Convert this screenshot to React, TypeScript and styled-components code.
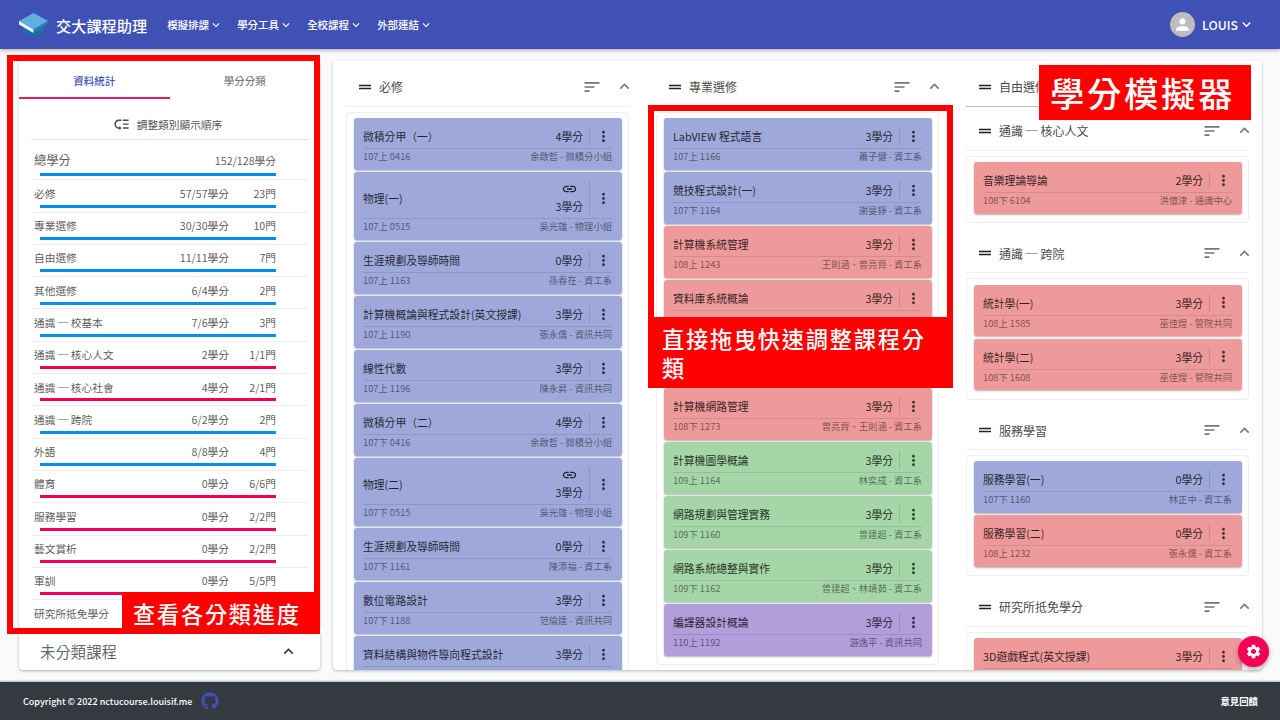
import React from "react";
import styled, { createGlobalStyle } from "styled-components";
import {
  MdDragHandle,
  MdExpandLess,
  MdExpandMore,
  MdLink,
  MdLowPriority,
  MdMoreVert,
  MdPerson,
  MdSettings,
  MdSort,
} from "react-icons/md";
import { FaGithub } from "react-icons/fa";

const GlobalStyle = createGlobalStyle`
  html, body {
    margin: 0;
    padding: 0;
    height: 100%;
    overflow: hidden;
    background: #fafafa;
    font-family: "Noto Sans CJK TC", "Noto Sans", sans-serif;
  }
  * {
    box-sizing: border-box;
  }
`;

type Tone = "blue" | "red" | "green" | "purple";

const toneColors: Record<Tone, string> = {
  blue: "#9fa8da",
  red: "#ef9a9a",
  green: "#a5d6a7",
  purple: "#b39ddb",
};

type Course = {
  name: string;
  credit: number | null;
  term: string;
  teacher: string;
  tone: Tone;
  linked?: boolean;
};

const requiredCourses: Course[] = [
  { name: "微積分甲（一）", credit: 4, term: "107上 0416", teacher: "余啟哲 - 微積分小組", tone: "blue" },
  { name: "物理(一)", credit: 3, term: "107上 0515", teacher: "吳光雄 - 物理小組", tone: "blue", linked: true },
  { name: "生涯規劃及導師時間", credit: 0, term: "107上 1163", teacher: "孫春在 - 資工系", tone: "blue" },
  { name: "計算機概論與程式設計(英文授課)", credit: 3, term: "107上 1190", teacher: "張永儒 - 資訊共同", tone: "blue" },
  { name: "線性代數", credit: 3, term: "107上 1196", teacher: "陳永昇 - 資訊共同", tone: "blue" },
  { name: "微積分甲（二）", credit: 4, term: "107下 0416", teacher: "余啟哲 - 微積分小組", tone: "blue" },
  { name: "物理(二)", credit: 3, term: "107下 0515", teacher: "吳光雄 - 物理小組", tone: "blue", linked: true },
  { name: "生涯規劃及導師時間", credit: 0, term: "107下 1161", teacher: "陳添福 - 資工系", tone: "blue" },
  { name: "數位電路設計", credit: 3, term: "107下 1188", teacher: "范倫達 - 資訊共同", tone: "blue" },
  { name: "資料結構與物件導向程式設計", credit: 3, term: "", teacher: "", tone: "blue" },
];

const majorCourses: Course[] = [
  { name: "LabVIEW 程式語言", credit: 3, term: "107上 1166", teacher: "蕭子健 - 資工系", tone: "blue" },
  { name: "競技程式設計(一)", credit: 3, term: "107下 1164", teacher: "謝旻錚 - 資工系", tone: "blue" },
  { name: "計算機系統管理", credit: 3, term: "108上 1243", teacher: "王則涵、曾亮齊 - 資工系", tone: "red" },
  { name: "資料庫系統概論", credit: 3, term: "", teacher: "", tone: "red" },
  // 被標註蓋住的卡片
  { name: "", credit: null, term: "", teacher: "", tone: "red" },
  { name: "計算機網路管理", credit: 3, term: "108下 1273", teacher: "曾亮齊、王則涵 - 資工系", tone: "red" },
  { name: "計算機圖學概論", credit: 3, term: "109上 1164", teacher: "林奕成 - 資工系", tone: "green" },
  { name: "網路規劃與管理實務", credit: 3, term: "109下 1160", teacher: "曾建超 - 資工系", tone: "green" },
  { name: "網路系統總整與實作", credit: 3, term: "109下 1162", teacher: "曾建超、林靖茹 - 資工系", tone: "green" },
  { name: "編譯器設計概論", credit: 3, term: "110上 1192", teacher: "游逸平 - 資訊共同", tone: "purple" },
];

const freeSections: { title: string; courses: Course[] }[] = [
  {
    title: "通識 ─ 核心人文",
    courses: [{ name: "音樂理論導論", credit: 2, term: "108下 6104", teacher: "洪億津 - 通識中心", tone: "red" }],
  },
  {
    title: "通識 ─ 跨院",
    courses: [
      { name: "統計學(一)", credit: 3, term: "108上 1585", teacher: "巫佳煌 - 管院共同", tone: "red" },
      { name: "統計學(二)", credit: 3, term: "108下 1608", teacher: "巫佳煌 - 管院共同", tone: "red" },
    ],
  },
  {
    title: "服務學習",
    courses: [
      { name: "服務學習(一)", credit: 0, term: "107下 1160", teacher: "林正中 - 資工系", tone: "blue" },
      { name: "服務學習(二)", credit: 0, term: "108上 1232", teacher: "張永儒 - 資工系", tone: "red" },
    ],
  },
  {
    title: "研究所抵免學分",
    courses: [{ name: "3D遊戲程式(英文授課)", credit: 3, term: "", teacher: "", tone: "red" }],
  },
];

const statRows: { label: string; credit: string; count: string; done: boolean }[] = [
  { label: "必修", credit: "57/57學分", count: "23門", done: true },
  { label: "專業選修", credit: "30/30學分", count: "10門", done: true },
  { label: "自由選修", credit: "11/11學分", count: "7門", done: true },
  { label: "其他選修", credit: "6/4學分", count: "2門", done: true },
  { label: "通識 ─ 校基本", credit: "7/6學分", count: "3門", done: true },
  { label: "通識 ─ 核心人文", credit: "2學分", count: "1/1門", done: false },
  { label: "通識 ─ 核心社會", credit: "4學分", count: "2/1門", done: false },
  { label: "通識 ─ 跨院", credit: "6/2學分", count: "2門", done: true },
  { label: "外語", credit: "8/8學分", count: "4門", done: true },
  { label: "體育", credit: "0學分", count: "6/6門", done: false },
  { label: "服務學習", credit: "0學分", count: "2/2門", done: false },
  { label: "藝文賞析", credit: "0學分", count: "2/2門", done: false },
  { label: "軍訓", credit: "0學分", count: "5/5門", done: false },
  { label: "研究所抵免學分", credit: "", count: "", done: true },
];

const navItems = ["模擬排課", "學分工具", "全校課程", "外部連結"];

const Page = styled.div`
  position: relative;
  width: 1280px;
  height: 720px;
  display: flex;
  flex-direction: column;
  overflow: hidden;
  background: #fafafa;
`;

const AppBar = styled.header`
  flex: 0 0 49px;
  display: flex;
  align-items: center;
  padding: 0 25px 0 19px;
  background: #3f51b5;
  color: #fff;
  box-shadow: 0 1px 4px rgba(0, 0, 0, 0.35);
  z-index: 2;
`;

const Brand = styled.div`
  display: flex;
  align-items: center;
  gap: 8px;
  font-size: 15.2px;
  font-weight: 500;
  margin-right: 20px;
`;

const Nav = styled.nav`
  display: flex;
  gap: 14px;
  flex: 1;
`;

const NavItem = styled.div`
  display: flex;
  align-items: center;
  width: 56px;
  font-size: 10.5px;
  font-weight: 500;
  white-space: nowrap;
  svg {
    flex: none;
  }
`;

const UserMenu = styled.div`
  display: flex;
  align-items: center;
  font-size: 12.3px;
  font-weight: 500;
`;

const Avatar = styled.div`
  width: 25px;
  height: 25px;
  border-radius: 50%;
  margin-right: 7px;
  display: flex;
  align-items: center;
  justify-content: center;
  background: #bdbdbd;
  color: #fff;
`;

const Main = styled.main`
  flex: 1;
  min-height: 0;
  display: flex;
  gap: 13px;
  padding: 12px 18px 12px 19px;
`;

const SideColumn = styled.aside`
  flex: 0 0 301px;
  display: flex;
  flex-direction: column;
  gap: 4px;
  min-height: 0;
`;

const StatsPaper = styled.section`
  flex: 1;
  min-height: 0;
  overflow: hidden;
  background: #fff;
  border-radius: 4px;
  box-shadow: 0 1px 3px rgba(0, 0, 0, 0.2);
`;

const Tabs = styled.div`
  display: flex;
  height: 38px;
`;

const Tab = styled.div<{ $active?: boolean }>`
  flex: 1;
  display: flex;
  align-items: center;
  justify-content: center;
  padding-top: 2px;
  font-size: 10.5px;
  font-weight: 500;
  color: ${(p) => (p.$active ? "#3f51b5" : "rgba(0, 0, 0, 0.54)")};
  border-bottom: 2px solid ${(p) => (p.$active ? "#e6195f" : "transparent")};
`;

const StatsBody = styled.div`
  height: 525px;
  overflow: hidden;
  padding: 4px 12px 0;
`;

const ReorderRow = styled.div`
  height: 37px;
  display: flex;
  align-items: center;
  justify-content: center;
  gap: 7px;
  padding: 6px 4px 0 0;
  font-size: 10.7px;
  color: rgba(0, 0, 0, 0.72);
  border-bottom: 1.5px solid #e0e0e0;
`;

const StatRow = styled.div<{ $total?: boolean }>`
  height: ${(p) => (p.$total ? "40.3px" : "32.3px")};
  padding: ${(p) => (p.$total ? "12px" : "5px")} 32px 0 3px;
  border-bottom: 1px solid #ececec;
`;

const StatLine = styled.div`
  display: flex;
  align-items: center;
  height: 16px;
  font-size: 10.7px;
  color: rgba(0, 0, 0, 0.68);
  white-space: nowrap;
`;

const StatName = styled.span<{ $total?: boolean }>`
  flex: 1;
  font-size: ${(p) => (p.$total ? "12.3px" : "10.7px")};
`;

const StatCredit = styled.span`
  text-align: right;
`;

const StatCount = styled.span`
  width: 47px;
  text-align: right;
`;

const StatBar = styled.div<{ $done: boolean; $total?: boolean }>`
  height: 3px;
  margin: ${(p) => (p.$total ? "4.5px" : "3.4px")} 0 0 6px;
  background: ${(p) => (p.$done ? "#0091ea" : "#f50057")};
`;

const Accordion = styled.section`
  flex: 0 0 38px;
  display: flex;
  align-items: center;
  justify-content: space-between;
  padding: 0 22px 0 21px;
  background: #fff;
  border-radius: 0 0 4px 4px;
  box-shadow: 0 1px 3px rgba(0, 0, 0, 0.3);
  font-size: 15.4px;
  color: rgba(0, 0, 0, 0.62);
  svg {
    color: #333;
  }
`;

const BoardPaper = styled.section`
  flex: 1;
  min-width: 0;
  display: flex;
  gap: 27px;
  padding: 8px 13px 0;
  overflow: hidden;
  background: #fff;
  border-radius: 4px;
  box-shadow: 0 1px 3px rgba(0, 0, 0, 0.25);
`;

const BoardColumn = styled.div`
  flex: 0 0 283px;
`;

const GroupHead = styled.div<{ $strong?: boolean }>`
  height: 37.5px;
  display: flex;
  align-items: center;
  padding: 0 0 1px 10px;
  font-size: 12px;
  color: rgba(0, 0, 0, 0.75);
  border-bottom: 1.5px solid ${(p) => (p.$strong ? "#bdbdbd" : "#eeeeee")};
`;

const GroupTitle = styled.span`
  flex: 1;
  margin-left: 5px;
`;

const HeadIcons = styled.div`
  display: flex;
  align-items: center;
  gap: 13px;
  margin-right: -4.5px;
  color: #757575;
`;

const DragIcon = styled(MdDragHandle)`
  color: #222;
`;

const FreeList = styled.div`
  display: flex;
  flex-direction: column;
  gap: 12.7px;
  margin-top: 6.5px;
`;

const CourseBox = styled.div`
  margin-top: 5px;
  padding: 5.5px 6px 6px 6.5px;
  border: 1px solid #eeeeee;
  border-radius: 4px;
`;

const Card = styled.article<{ $tone: Tone }>`
  margin-bottom: 2.5px;
  padding: 0 10px 0 9.5px;
  border-radius: 3px;
  background: ${(p) => toneColors[p.$tone]};
  box-shadow: 0 1px 2px rgba(0, 0, 0, 0.3);
`;

const CardTop = styled.div`
  display: flex;
  align-items: center;
  min-height: 31px;
  padding: 9px 0 3px;
  border-bottom: 1px solid rgba(0, 0, 0, 0.1);
`;

const CardName = styled.div`
  flex: 1;
  min-width: 0;
  font-size: 10.8px;
  line-height: 18px;
  color: rgba(0, 0, 0, 0.8);
  white-space: nowrap;
`;

const CreditBox = styled.div`
  display: flex;
  flex-direction: column;
  align-items: center;
  padding-right: 6px;
  font-size: 10.8px;
  line-height: 18px;
  color: rgba(0, 0, 0, 0.82);
  border-right: 1px solid rgba(0, 0, 0, 0.12);
  white-space: nowrap;
`;

const LinkIcon = styled(MdLink)`
  height: 16px;
  color: #222;
`;

const MoreButton = styled.div`
  width: 22px;
  display: flex;
  justify-content: center;
  padding-left: 4px;
  color: rgba(0, 0, 0, 0.7);
`;

const CardMeta = styled.div`
  display: flex;
  justify-content: space-between;
  height: 20.5px;
  padding-bottom: 6.5px;
  align-items: center;
  font-size: 9.3px;
  color: rgba(0, 0, 0, 0.5);
  white-space: nowrap;
`;

const Footer = styled.footer`
  flex: 0 0 38px;
  display: flex;
  align-items: center;
  justify-content: space-between;
  padding: 0 22px 0 23px;
  background: #343a40;
  color: #fff;
  font-size: 9px;
  font-weight: 500;
  box-shadow: 0 -1px 2px rgba(0, 0, 0, 0.3);
  z-index: 2;
`;

const Copyright = styled.div`
  display: flex;
  align-items: center;
  gap: 9px;
  svg {
    color: #3f51b5;
  }
`;

const FeedbackLink = styled.span`
  font-size: 9.4px;
  font-weight: 700;
`;

const SettingsFab = styled.div`
  position: absolute;
  left: 1238px;
  top: 636px;
  width: 31px;
  height: 31px;
  display: flex;
  align-items: center;
  justify-content: center;
  border-radius: 50%;
  background: #f50057;
  color: #fff;
  box-shadow: 0 2px 5px rgba(0, 0, 0, 0.35);
  z-index: 3;
`;

// 簡報上加的紅色標註
const AnnotationFrame = styled.div<{ $left: number; $top: number; $width: number; $height: number }>`
  position: absolute;
  left: ${(p) => p.$left}px;
  top: ${(p) => p.$top}px;
  width: ${(p) => p.$width}px;
  height: ${(p) => p.$height}px;
  border: 6px solid #ff0000;
  z-index: 4;
`;

const AnnotationLabel = styled.div<{
  $left: number;
  $top: number;
  $width: number;
  $height: number;
  $size: number;
  $inset: number;
}>`
  position: absolute;
  left: ${(p) => p.$left}px;
  top: ${(p) => p.$top}px;
  width: ${(p) => p.$width}px;
  height: ${(p) => p.$height}px;
  display: flex;
  align-items: center;
  padding: 0 ${(p) => p.$inset}px;
  background: #ff0000;
  color: #fff;
  font-size: ${(p) => p.$size}px;
  font-weight: 500;
  line-height: 29px;
  letter-spacing: ${(p) => p.$size * 0.08}px;
  z-index: 5;
`;

const Logo = () => (
  <svg width="29" height="23" viewBox="0 0 29 23">
    <path d="M4 11v8c3 2.500 7 4 10.500 4S22 21.500 25 19v-8l-10.500 6z" fill="#1c6fa3" />
    <path d="M14.500 0L29 8l-14.500 8.500L0 8z" fill="#62aede" />
    <path d="M0 8l14.500 8.500V20L0 11.500z" fill="#f2f6f9" />
    <path d="M29 8l-14.500 8.500V20L29 10.500z" fill="#2a7db3" />
  </svg>
);

const CourseCard = ({ course }: { course: Course }) => (
  <Card $tone={course.tone}>
    <CardTop>
      <CardName>{course.name}</CardName>
      {course.credit !== null && (
        <>
          <CreditBox>
            {course.linked && <LinkIcon size={17} />}
            <span>{course.credit}學分</span>
          </CreditBox>
          <MoreButton>
            <MdMoreVert size={17} />
          </MoreButton>
        </>
      )}
    </CardTop>
    <CardMeta>
      <span>{course.term}</span>
      <span>{course.teacher}</span>
    </CardMeta>
  </Card>
);

const Heading = ({ title, strong }: { title: string; strong?: boolean }) => (
  <GroupHead $strong={strong}>
    <DragIcon size={18} />
    <GroupTitle>{title}</GroupTitle>
    <HeadIcons>
      <MdSort size={20} />
      <MdExpandLess size={19} />
    </HeadIcons>
  </GroupHead>
);

const App = () => {
  return (
    <Page>
      <GlobalStyle />
      <AppBar>
        <Brand>
          <Logo />
          交大課程助理
        </Brand>
        <Nav>
          {navItems.map((item) => (
            <NavItem key={item}>
              {item}
              <MdExpandMore size={14} />
            </NavItem>
          ))}
        </Nav>
        <UserMenu>
          <Avatar>
            <MdPerson size={19} />
          </Avatar>
          LOUIS
          <MdExpandMore size={17} />
        </UserMenu>
      </AppBar>

      <Main>
        <SideColumn>
          <StatsPaper>
            <Tabs>
              <Tab $active>資料統計</Tab>
              <Tab>學分分類</Tab>
            </Tabs>
            <StatsBody>
              <ReorderRow>
                <MdLowPriority size={17} />
                調整類別顯示順序
              </ReorderRow>
              <StatRow $total>
                <StatLine>
                  <StatName $total>總學分</StatName>
                  <StatCredit>152/128學分</StatCredit>
                </StatLine>
                <StatBar $done $total />
              </StatRow>
              {statRows.map((row) => (
                <StatRow key={row.label}>
                  <StatLine>
                    <StatName>{row.label}</StatName>
                    <StatCredit>{row.credit}</StatCredit>
                    <StatCount>{row.count}</StatCount>
                  </StatLine>
                  <StatBar $done={row.done} />
                </StatRow>
              ))}
            </StatsBody>
          </StatsPaper>
          <Accordion>
            未分類課程
            <MdExpandLess size={19} />
          </Accordion>
        </SideColumn>

        <BoardPaper>
          <BoardColumn>
            <Heading title="必修" />
            <CourseBox>
              {requiredCourses.map((course) => (
                <CourseCard key={course.name + course.term} course={course} />
              ))}
            </CourseBox>
          </BoardColumn>
          <BoardColumn>
            <Heading title="專業選修" />
            <CourseBox>
              {majorCourses.map((course) => (
                <CourseCard key={course.name + course.term} course={course} />
              ))}
            </CourseBox>
          </BoardColumn>
          <BoardColumn>
            <Heading title="自由選修" strong />
            <FreeList>
              {freeSections.map((section) => (
                <div key={section.title}>
                  <Heading title={section.title} />
                  <CourseBox>
                    {section.courses.map((course) => (
                      <CourseCard key={course.name} course={course} />
                    ))}
                  </CourseBox>
                </div>
              ))}
            </FreeList>
          </BoardColumn>
        </BoardPaper>
      </Main>

      <Footer>
        <Copyright>
          Copyright © 2022 nctucourse.louisif.me
          <FaGithub size={18} />
        </Copyright>
        <FeedbackLink>意見回饋</FeedbackLink>
      </Footer>

      <SettingsFab>
        <MdSettings size={17} />
      </SettingsFab>

      <AnnotationFrame $left={7} $top={55} $width={313} $height={579} />
      <AnnotationLabel $left={122} $top={592} $width={198} $height={42} $size={22.2} $inset={11}>
        查看各分類進度
      </AnnotationLabel>
      <AnnotationFrame $left={648} $top={105} $width={305} $height={220} />
      <AnnotationLabel $left={648} $top={317} $width={305} $height={71} $size={22.2} $inset={14}>
        直接拖曳快速調整課程分類
      </AnnotationLabel>
      <AnnotationLabel $left={1039} $top={65} $width={212} $height={55} $size={34.3} $inset={11}>
        學分模擬器
      </AnnotationLabel>
    </Page>
  );
};

export default App;
